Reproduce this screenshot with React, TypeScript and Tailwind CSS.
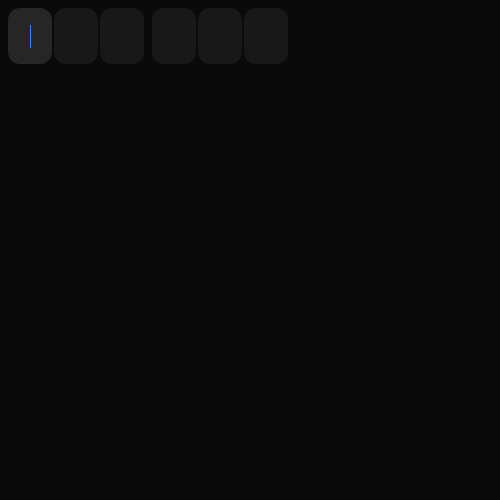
export default function App() {
  const Box = ({ active }: { active?: boolean }) => (
    <div className={`w-[44px] h-[56px] rounded-[12px] flex items-center justify-center ${active ? "bg-[#262626]" : "bg-[#181818]"}`}>
      {active && <div className="w-px h-[23px] bg-[#3b82f6]" />}
    </div>
  );
  return (
    <div className="w-[500px] h-[500px] bg-[#0a0a0a] p-2" style={{ fontFamily: "Inter, sans-serif" }}>
      <div className="flex gap-2">
        <div className="flex gap-[2px]">
          <Box active />
          <Box />
          <Box />
        </div>
        <div className="flex gap-[2px]">
          <Box />
          <Box />
          <Box />
        </div>
      </div>
    </div>
  );
}
